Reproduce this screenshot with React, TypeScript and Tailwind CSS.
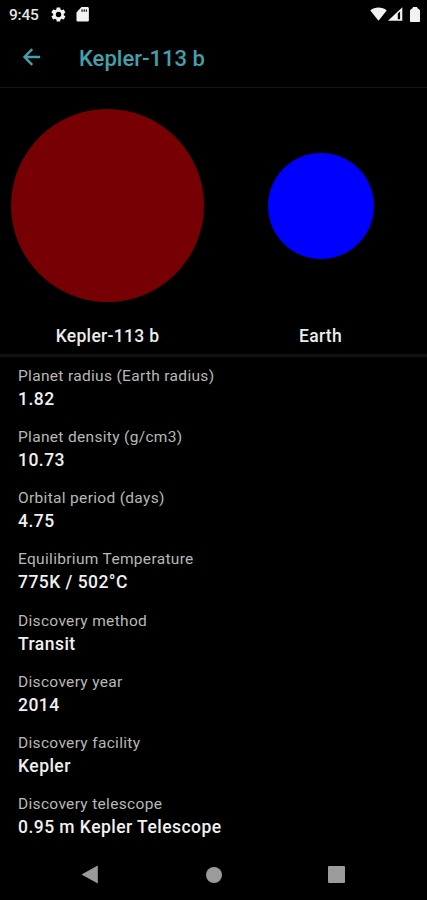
import React from "react";

interface Detail {
  label: string;
  value: string;
}

const details: Detail[] = [
  { label: "Planet radius (Earth radius)", value: "1.82" },
  { label: "Planet density (g/cm3)", value: "10.73" },
  { label: "Orbital period (days)", value: "4.75" },
  { label: "Equilibrium Temperature", value: "775K / 502°C" },
  { label: "Discovery method", value: "Transit" },
  { label: "Discovery year", value: "2014" },
  { label: "Discovery facility", value: "Kepler" },
  { label: "Discovery telescope", value: "0.95 m Kepler Telescope" },
];

function StatusBar() {
  return (
    <div className="flex h-7 shrink-0 items-center pl-[9px] pr-[7px] text-[#f2f2f2]">
      <span className="w-[41px] pt-0.5 text-[15.5px] leading-7 font-medium tracking-[-0.2px] text-[#e4e4e4]">9:45</span>
      <svg width="17" height="17" viewBox="0 0 24 24" fill="currentColor">
        <path
          fillRule="evenodd"
          d="M19.4 13c.1-.3.1-.7.1-1s0-.7-.1-1l2.1-1.600c.2-.2.3-.4.1-.7l-2-3.400c-.1-.2-.4-.3-.6-.2l-2.500 1c-.5-.4-1.100-.7-1.700-1l-.4-2.600c0-.3-.2-.5-.5-.5h-4c-.3 0-.5.2-.5.5L9 5.100c-.6.3-1.200.6-1.700 1l-2.500-1c-.2-.1-.5 0-.6.2l-2 3.400c-.1.3-.1.5.1.7L4.500 11c0 .3-.1.7-.1 1s0 .7.1 1l-2.200 1.600c-.2.2-.2.4-.1.700l2 3.400c.1.2.4.3.6.2l2.500-1c.5.4 1.100.7 1.700 1l.4 2.600c0 .3.2.5.5.5h4c.3 0 .5-.2.5-.5l.4-2.600c.6-.3 1.200-.6 1.700-1l2.500 1c.2.1.5 0 .6-.2l2-3.400c.1-.3.1-.5-.1-.7zM12 15.800a3.800 3.800 0 1 1 0-7.600 3.800 3.800 0 0 1 0 7.600z"
        />
      </svg>
      <svg className="ml-[7px]" width="17" height="17" viewBox="0 0 24 24" fill="currentColor">
        <path
          fillRule="evenodd"
          d="M19 1.500h-8.500L3.500 9v11c0 1.100.9 2 2 2H19c1.100 0 2-.9 2-2V3.500c0-1.100-.9-2-2-2zM10.500 5h1.700v3h-1.700zM13.600 5h1.700v3h-1.700zM16.700 5h1.500v3h-1.500z"
        />
      </svg>
      <div className="ml-auto flex items-center">
        <svg width="17" height="14" viewBox="0 0 17 14" fill="currentColor">
          <path d="M0.300 3.400C4.800-.4 12.200-.4 16.700 3.400L8.500 13.800z" />
        </svg>
        <svg className="ml-[1px]" width="15" height="14" viewBox="0 0 15 14">
          <path
            fill="currentColor"
            fillRule="evenodd"
            d="M0 13.800L14.300.200v13.600zM9.800 6.500v5.700h2.300V4.500z"
          />
        </svg>
        <svg className="ml-[7px]" width="10" height="15" viewBox="0 0 10 15" fill="currentColor">
          <path d="M2.800 0h4.400v1.200h.6L10 3.300V14c0 .6-.4 1-1 1H1c-.6 0-1-.4-1-1V3.300L2.200 1.200h.6z" />
        </svg>
      </div>
    </div>
  );
}

function Header({ title }: { title: string }) {
  return (
    <header className="flex h-[60px] shrink-0 items-center border-b border-[#161616] pl-[19px] text-[#43a0ad]">
      <svg width="25" height="25" viewBox="0 0 24 24" fill="none" stroke="currentColor" strokeWidth="2.300">
        <path d="M20.300 11.500H5.500M12.700 4L5.300 11.500L12.700 19" />
      </svg>
      <h1 className="ml-[35px] pt-[3px] text-[22px] leading-7 font-medium">{title}</h1>
    </header>
  );
}

function Planet({ name, className }: { name: string; className: string }) {
  return (
    <div className="flex flex-1 flex-col items-center">
      <div className="flex h-[235px] items-center justify-center">
        <div className={`rounded-full ${className}`} />
      </div>
      <span className="pt-px text-[17.5px] leading-6 font-medium tracking-[0.3px] text-[#ececec]">{name}</span>
    </div>
  );
}

function DetailRow({ label, value }: Detail) {
  return (
    <div className="h-[61.150px]">
      <dt className="text-[15.5px] leading-5 tracking-[0.32px] text-[#b8b8b8]">{label}</dt>
      <dd className="pt-px text-[17.5px] leading-6 font-medium tracking-[0.46px] text-[#f0f0f0]">{value}</dd>
    </div>
  );
}

function NavigationBar() {
  return (
    <nav className="flex h-[51px] shrink-0 items-center justify-between pl-[81px] pr-[82px] text-[#9b9b9b]">
      <svg width="17" height="19" viewBox="0 0 17 19" fill="currentColor">
        <path d="M16.800.500v18L.500 9.500z" />
      </svg>
      <div className="ml-px size-[16px] rounded-full bg-current" />
      <div className="size-[17px] rounded-[1px] bg-current" />
    </nav>
  );
}

export default function App() {
  return (
    <div className="flex h-[900px] w-[427px] flex-col overflow-hidden bg-black font-['Roboto',sans-serif]">
      <StatusBar />
      <Header title="Kepler-113 b" />
      <section className="flex h-[269px] shrink-0 border-b-3 border-[#101010] pl-px">
        <Planet name="Kepler-113 b" className="size-[193px] bg-[#760003]" />
        <Planet name="Earth" className="size-[106px] bg-[#0000ff]" />
      </section>
      <dl className="min-h-0 flex-1 overflow-hidden pt-[9px] pl-[18px]">
        {details.map((detail) => (
          <DetailRow key={detail.label} {...detail} />
        ))}
      </dl>
      <NavigationBar />
    </div>
  );
}
